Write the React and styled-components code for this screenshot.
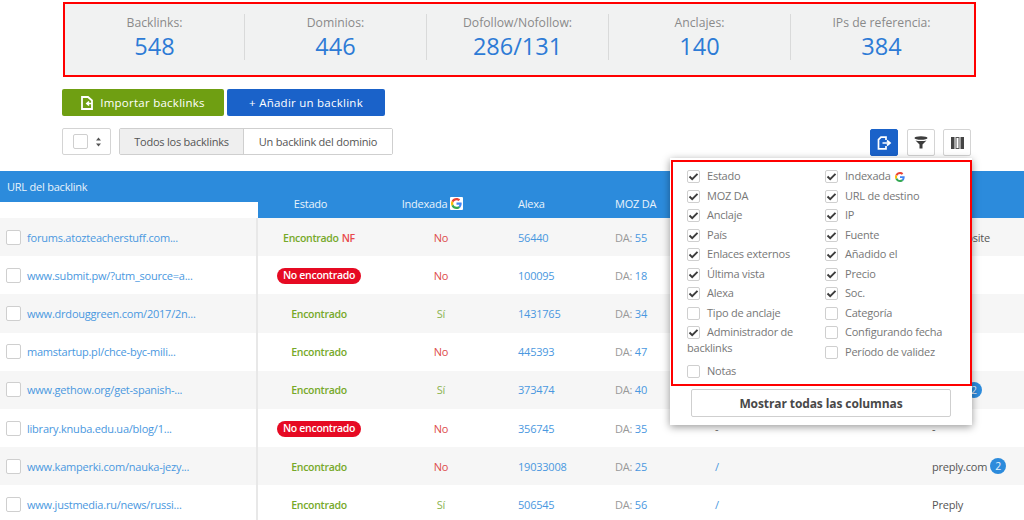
import React from 'react';
import styled, { createGlobalStyle } from 'styled-components';

const FONT = '"Open Sans", "Noto Sans", sans-serif';

const GlobalStyle = createGlobalStyle`
  html, body {
    margin: 0;
    padding: 0;
    background: #fff;
    overflow: hidden;
  }
  body {
    font-family: ${FONT};
    font-size: 11px;
    letter-spacing: -0.22px;
    color: #555;
  }
  * {
    box-sizing: border-box;
  }
`;

const Page = styled.div`
  position: relative;
  width: 1024px;
  height: 520px;
  overflow: hidden;
  padding-top: 2px;
`;

const Stats = styled.div`
  display: flex;
  align-items: flex-start;
  width: 913px;
  height: 75px;
  margin-left: 63px;
  padding-top: 10px;
  background: #f1f2f2;
  border: 2px solid #f00;
`;

const Stat = styled.div`
  flex: 0 0 ${p => (p.$first ? 179 : 182)}px;
  height: 46px;
  text-align: center;
  letter-spacing: 0;
  border-left: ${p => (p.$first ? 'none' : '1px solid #d9dada')};
  .label {
    font-size: 12.2px;
    line-height: 17px;
    color: #8a8a8a;
  }
  .value {
    font-size: 23.5px;
    line-height: 29px;
    margin-top: 1px;
    color: #2d7bd6;
  }
`;

const Actions = styled.div`
  display: flex;
  gap: 3px;
  margin: 12px 0 0 62px;
`;

const ActionButton = styled.div`
  display: flex;
  align-items: center;
  justify-content: center;
  gap: 7px;
  width: ${p => p.$width}px;
  height: 27px;
  border-radius: 2px;
  background: ${p => p.$bg};
  color: #fff;
  font-size: 11.5px;
  font-weight: 500;
  letter-spacing: 0.25px;
`;

const Toolbar = styled.div`
  display: flex;
  align-items: flex-start;
  height: 28px;
  margin: 12px 0 0 62px;
`;

const SelectAll = styled.div`
  display: flex;
  align-items: center;
  gap: 8px;
  width: 49px;
  height: 27px;
  padding-left: 10px;
  background: #fff;
  border: 1px solid #d4d4d4;
  border-radius: 2px;
`;

const Segments = styled.div`
  display: flex;
  height: 27px;
  margin-left: 8px;
  border: 1px solid #cfcfcf;
  border-radius: 2px;
`;

const Segment = styled.div`
  display: flex;
  align-items: center;
  justify-content: center;
  width: ${p => p.$width}px;
  background: ${p => (p.$active ? '#efefef' : '#fff')};
  border-left: ${p => (p.$active ? 'none' : '1px solid #cfcfcf')};
  color: #555;
  font-size: 11px;
`;

const ToolIcons = styled.div`
  display: flex;
  margin-left: auto;
  margin-right: 53px;
  padding-top: 1px;
`;

const ToolIcon = styled.div`
  display: flex;
  align-items: center;
  justify-content: center;
  width: 28px;
  height: 27px;
  margin-left: ${p => p.$gap || 0}px;
  border-radius: 2px;
  background: ${p => (p.$primary ? '#1a62c9' : '#fff')};
  border: 1px solid ${p => (p.$primary ? '#1a62c9' : '#d4d4d4')};
`;

const TableHeader = styled.div`
  display: grid;
  grid-template-columns: 258px 122px 122px 97px 425px;
  height: 47px;
  margin-top: 15px;
  background: #2c8bdc;
  color: #e9f3fb;
  font-size: 11px;
`;

const HeaderUrl = styled.div`
  height: 47px;
  padding: 8px 0 0 7px;
  background: linear-gradient(#2c8bdc 31px, #fff 31px);
  line-height: 16px;
`;

const HeaderCell = styled.div`
  display: flex;
  align-items: center;
  justify-content: ${p => (p.$left ? 'flex-start' : 'center')};
  gap: 3px;
  padding: 18px ${p => (p.$left ? 0 : 17)}px 0 ${p => (p.$left ? 16 : 0)}px;
  line-height: 16px;
`;

const GBadge = styled.span`
  display: inline-flex;
  align-items: center;
  justify-content: center;
  width: 13px;
  height: 13px;
  background: #fff;
  border-radius: 1px;
`;

const Row = styled.div`
  display: grid;
  grid-template-columns: 258px 122px 122px 97px 100px 233px 92px;
  height: 38.2px;
  background: ${p => (p.$even ? '#fff' : '#f6f6f6')};
  align-items: center;
  font-size: 11px;
`;

const UrlCell = styled.div`
  display: flex;
  align-items: center;
  height: 100%;
  padding-left: 6px;
  border-right: 2px solid #e8e8e8;
  a {
    margin-left: 6px;
    color: #4a98e0;
    white-space: nowrap;
    text-decoration: none;
  }
`;

const Box = styled.span`
  display: inline-block;
  flex: none;
  position: relative;
  width: ${p => p.$size || 14}px;
  height: ${p => p.$size || 14}px;
  background: #fff;
  border: 1px solid #cfcfcf;
  border-radius: 2px;
  vertical-align: -3px;
`;

const StatusCell = styled.div`
  display: flex;
  align-items: center;
  justify-content: center;
  gap: 3px;
  padding-top: 1px;
  font-size: 10.5px;
  font-weight: 600;
  letter-spacing: -0.3px;
  color: #76a92a;
  span {
    color: #e8494c;
  }
`;

const Pill = styled.span`
  display: block;
  height: 16px;
  padding: 0 6px;
  border-radius: 8px;
  background: #e60a23;
  line-height: 15px;
  font-size: 10.5px;
  font-weight: 600;
  && {
    color: #fff;
  }
`;

const YesNo = styled.div`
  text-align: center;
  color: ${p => (p.$yes ? '#8cb450' : '#dd4b4b')};
`;

const TargetCell = styled.div`
  padding-left: 16px;
  color: ${p => (p.$plain ? '#666' : '#4a98e0')};
`;

const DaCell = styled.div`
  padding-left: 16px;
  color: #999;
  b {
    font-weight: 400;
    color: #4a98e0;
  }
`;

const SourceCell = styled.div`
  display: flex;
  align-items: center;
  gap: 3px;
  white-space: nowrap;
  color: #555;
`;

const Count = styled.span`
  display: inline-flex;
  align-items: center;
  justify-content: center;
  width: 16px;
  height: 16px;
  border-radius: 50%;
  background: #2c8bdc;
  color: #e6f2fb;
  font-size: 10.5px;
`;

const Popup = styled.div`
  position: absolute;
  left: 670px;
  top: 158px;
  width: 302px;
  height: 267px;
  padding-top: 2px;
  background: #fff;
  box-shadow: 0 2px 8px rgba(0, 0, 0, 0.4);
`;

const PopupFrame = styled.div`
  display: grid;
  grid-template-columns: 138px 1fr;
  height: 226px;
  margin-left: 1px;
  padding: 4px 0 0 14px;
  border: 2px solid #f00;
`;

const OptionColumn = styled.div`
  display: flex;
  flex-direction: column;
`;

const Option = styled.div`
  flex: none;
  height: ${p => (p.$wrap ? 39 : 19.5)}px;
  line-height: ${p => (p.$wrap ? 16.5 : 19.5)}px;
  padding-top: ${p => (p.$wrap ? 1.5 : 0)}px;
  color: #777;
  font-size: 11px;
  ${Box} {
    margin-right: 7px;
  }
`;

const GoogleMark = styled.span`
  display: inline-block;
  height: 10px;
  margin-left: 4px;
  line-height: 0;
  vertical-align: -2px;
`;

const Tick = styled.svg`
  position: absolute;
  left: 0;
  top: 0;
`;

const ShowAll = styled.div`
  display: flex;
  align-items: center;
  justify-content: center;
  width: 260px;
  height: 28px;
  margin: 3px 0 0 21px;
  border: 1px solid #cfcfcf;
  border-radius: 2px;
  color: #484848;
  font-size: 12px;
  font-weight: 700;
  letter-spacing: -0.1px;
`;

const GoogleIcon = ({ size = 11 }) => (
  <svg width={size} height={size} viewBox="0 0 48 48">
    <path fill="#EA4335" d="M24 9.5c3.5 0 6.6 1.2 9.1 3.6l6.8-6.8C35.8 2.5 30.4 0 24 0 14.6 0 6.5 5.4 2.6 13.2l7.9 6.2C12.4 13.7 17.7 9.5 24 9.5z" />
    <path fill="#4285F4" d="M46.5 24.5c0-1.6-.1-3.1-.4-4.5H24v9h12.7c-.5 2.9-2.2 5.400-4.700 7.100l7.600 5.900c4.400-4.100 6.900-10.100 6.900-17.500z" />
    <path fill="#FBBC05" d="M10.500 28.600c-.5-1.400-.8-3-.8-4.600s.3-3.200.8-4.600l-7.900-6.200C.9 16.500 0 20.100 0 24s.9 7.500 2.600 10.800l7.900-6.200z" />
    <path fill="#34A853" d="M24 48c6.500 0 11.900-2.100 15.900-5.800L32 36.100c-2.100 1.500-4.900 2.400-8 2.400-6.300 0-11.600-4.200-13.500-9.900l-7.900 6.200C6.500 42.600 14.600 48 24 48z" />
  </svg>
);

const CheckOption = ({ label, on, wrap, google }) => (
  <Option $wrap={wrap}>
    <Box $size={13}>
      {on && (
        <Tick width="11" height="11" viewBox="0 0 11 11">
          <path d="M1.500 5.500 L4.200 8.200 L9.500 2.800" fill="none" stroke="#3c3c3c" strokeWidth="1.900" />
        </Tick>
      )}
    </Box>
    {label}
    {google && (
      <GoogleMark>
        <GoogleIcon size={10} />
      </GoogleMark>
    )}
  </Option>
);

const STATS = [
  ['Backlinks:', '548'],
  ['Dominios:', '446'],
  ['Dofollow/Nofollow:', '286/131'],
  ['Anclajes:', '140'],
  ['IPs de referencia:', '384']
];

const LEFT_OPTIONS = [
  ['Estado', true],
  ['MOZ DA', true],
  ['Anclaje', true],
  ['País', true],
  ['Enlaces externos', true],
  ['Última vista', true],
  ['Alexa', true],
  ['Tipo de anclaje', false],
  ['Administrador de backlinks', true, true],
  ['Notas', false]
];

const RIGHT_OPTIONS = [
  ['URL de destino', true],
  ['IP', true],
  ['Fuente', true],
  ['Añadido el', true],
  ['Precio', true],
  ['Soc.', true],
  ['Categoría', false],
  ['Configurando fecha', false],
  ['Período de validez', false]
];

const ROWS = [
  { url: 'forums.atozteacherstuff.com...', status: 'nf', indexed: false, alexa: '56440', da: 55, target: '', source: 'Mis website' },
  { url: 'www.submit.pw/?utm_source=a...', status: 'lost', indexed: false, alexa: '100095', da: 18, target: '', source: '' },
  { url: 'www.drdouggreen.com/2017/2n...', status: 'ok', indexed: true, alexa: '1431765', da: 34, target: '', source: '' },
  { url: 'mamstartup.pl/chce-byc-mili...', status: 'ok', indexed: false, alexa: '445393', da: 47, target: '', source: '' },
  { url: 'www.gethow.org/get-spanish-...', status: 'ok', indexed: true, alexa: '373474', da: 40, target: '', source: 'Preply', count: 2 },
  { url: 'library.knuba.edu.ua/blog/1...', status: 'lost', indexed: false, alexa: '356745', da: 35, target: '-', source: '-' },
  { url: 'www.kamperki.com/nauka-jezy...', status: 'ok', indexed: false, alexa: '19033008', da: 25, target: '/', source: 'preply.com', count: 2 },
  { url: 'www.justmedia.ru/news/russi...', status: 'ok', indexed: true, alexa: '506545', da: 56, target: '/', source: 'Preply' }
];

const Status = ({ value }) => {
  if (value === 'lost') return <StatusCell><Pill>No encontrado</Pill></StatusCell>;
  if (value === 'nf') return <StatusCell>Encontrado <span>NF</span></StatusCell>;
  return <StatusCell>Encontrado</StatusCell>;
};

export default function App() {
  return (
    <Page>
      <GlobalStyle />
      <Stats>
        {STATS.map(([label, value], i) => (
          <Stat key={label} $first={i === 0}>
            <div className="label">{label}</div>
            <div className="value">{value}</div>
          </Stat>
        ))}
      </Stats>

      <Actions>
        <ActionButton $width={162} $bg="#6f9f12">
          <svg width="12" height="14" viewBox="0 0 12 14">
            <path d="M1 1h6l4 3.500V13H1z" fill="none" stroke="#fff" strokeWidth="1.800" />
            <path d="M11 7.500H6M8 5.500L5.800 7.500 8 9.500" fill="none" stroke="#fff" strokeWidth="1.600" />
          </svg>
          Importar backlinks
        </ActionButton>
        <ActionButton $width={158} $bg="#1a62c9">+ Añadir un backlink</ActionButton>
      </Actions>

      <Toolbar>
        <SelectAll>
          <Box $size={15} />
          <svg width="5" height="10" viewBox="0 0 5 10">
            <path d="M2.500 0.500L5 3.500H0zM2.500 9.500L0 6.500H5z" fill="#555" />
          </svg>
        </SelectAll>
        <Segments>
          <Segment $active $width={123}>Todos los backlinks</Segment>
          <Segment $width={149}>Un backlink del dominio</Segment>
        </Segments>
        <ToolIcons>
          <ToolIcon $primary>
            <svg width="15" height="14" viewBox="0 0 15 14">
              <path d="M9 4V1.200H4L1.500 3.700V12.800H9V10" fill="none" stroke="#fff" strokeWidth="1.700" />
              <path d="M5.500 7H12M10 4.500L13 7 10 9.500" fill="none" stroke="#fff" strokeWidth="1.700" />
            </svg>
          </ToolIcon>
          <ToolIcon $gap={9}>
            <svg width="14" height="13" viewBox="0 0 14 13">
              <ellipse cx="7" cy="2" rx="6.500" ry="1.700" fill="#3d3d3d" />
              <path d="M1.500 4.500C4 5.300 10 5.300 12.500 4.500L8.500 8.500V12.500H5.500V8.500z" fill="#3d3d3d" />
            </svg>
          </ToolIcon>
          <ToolIcon $gap={8}>
            <svg width="13" height="12" viewBox="0 0 13 12">
              <path d="M0 0h3.500v12H0zM9.500 0H13v12H9.500z" fill="#444" />
              <rect x="5" y="0.500" width="3" height="11" fill="none" stroke="#555" />
            </svg>
          </ToolIcon>
        </ToolIcons>
      </Toolbar>

      <TableHeader>
        <HeaderUrl>URL del backlink</HeaderUrl>
        <HeaderCell>Estado</HeaderCell>
        <HeaderCell>
          Indexada
          <GBadge><GoogleIcon /></GBadge>
        </HeaderCell>
        <HeaderCell $left>Alexa</HeaderCell>
        <HeaderCell $left>MOZ DA</HeaderCell>
      </TableHeader>

      {ROWS.map((row, i) => (
        <Row key={row.url} $even={i % 2 === 1}>
          <UrlCell>
            <Box $size={15} />
            <a href="#">{row.url}</a>
          </UrlCell>
          <Status value={row.status} />
          <YesNo $yes={row.indexed}>{row.indexed ? 'Sí' : 'No'}</YesNo>
          <TargetCell>{row.alexa}</TargetCell>
          <DaCell>DA: <b>{row.da}</b></DaCell>
          <TargetCell $plain={row.target === '-'}>{row.target}</TargetCell>
          <SourceCell>
            {row.source}
            {row.count && <Count>{row.count}</Count>}
          </SourceCell>
        </Row>
      ))}

      <Popup>
        <PopupFrame>
          <OptionColumn>
            {LEFT_OPTIONS.map(([label, on, wrap]) => (
              <CheckOption key={label} label={label} on={on} wrap={wrap} />
            ))}
          </OptionColumn>
          <OptionColumn>
            <CheckOption label="Indexada" on google />
            {RIGHT_OPTIONS.map(([label, on]) => (
              <CheckOption key={label} label={label} on={on} />
            ))}
          </OptionColumn>
        </PopupFrame>
        <ShowAll>Mostrar todas las columnas</ShowAll>
      </Popup>
    </Page>
  );
}
